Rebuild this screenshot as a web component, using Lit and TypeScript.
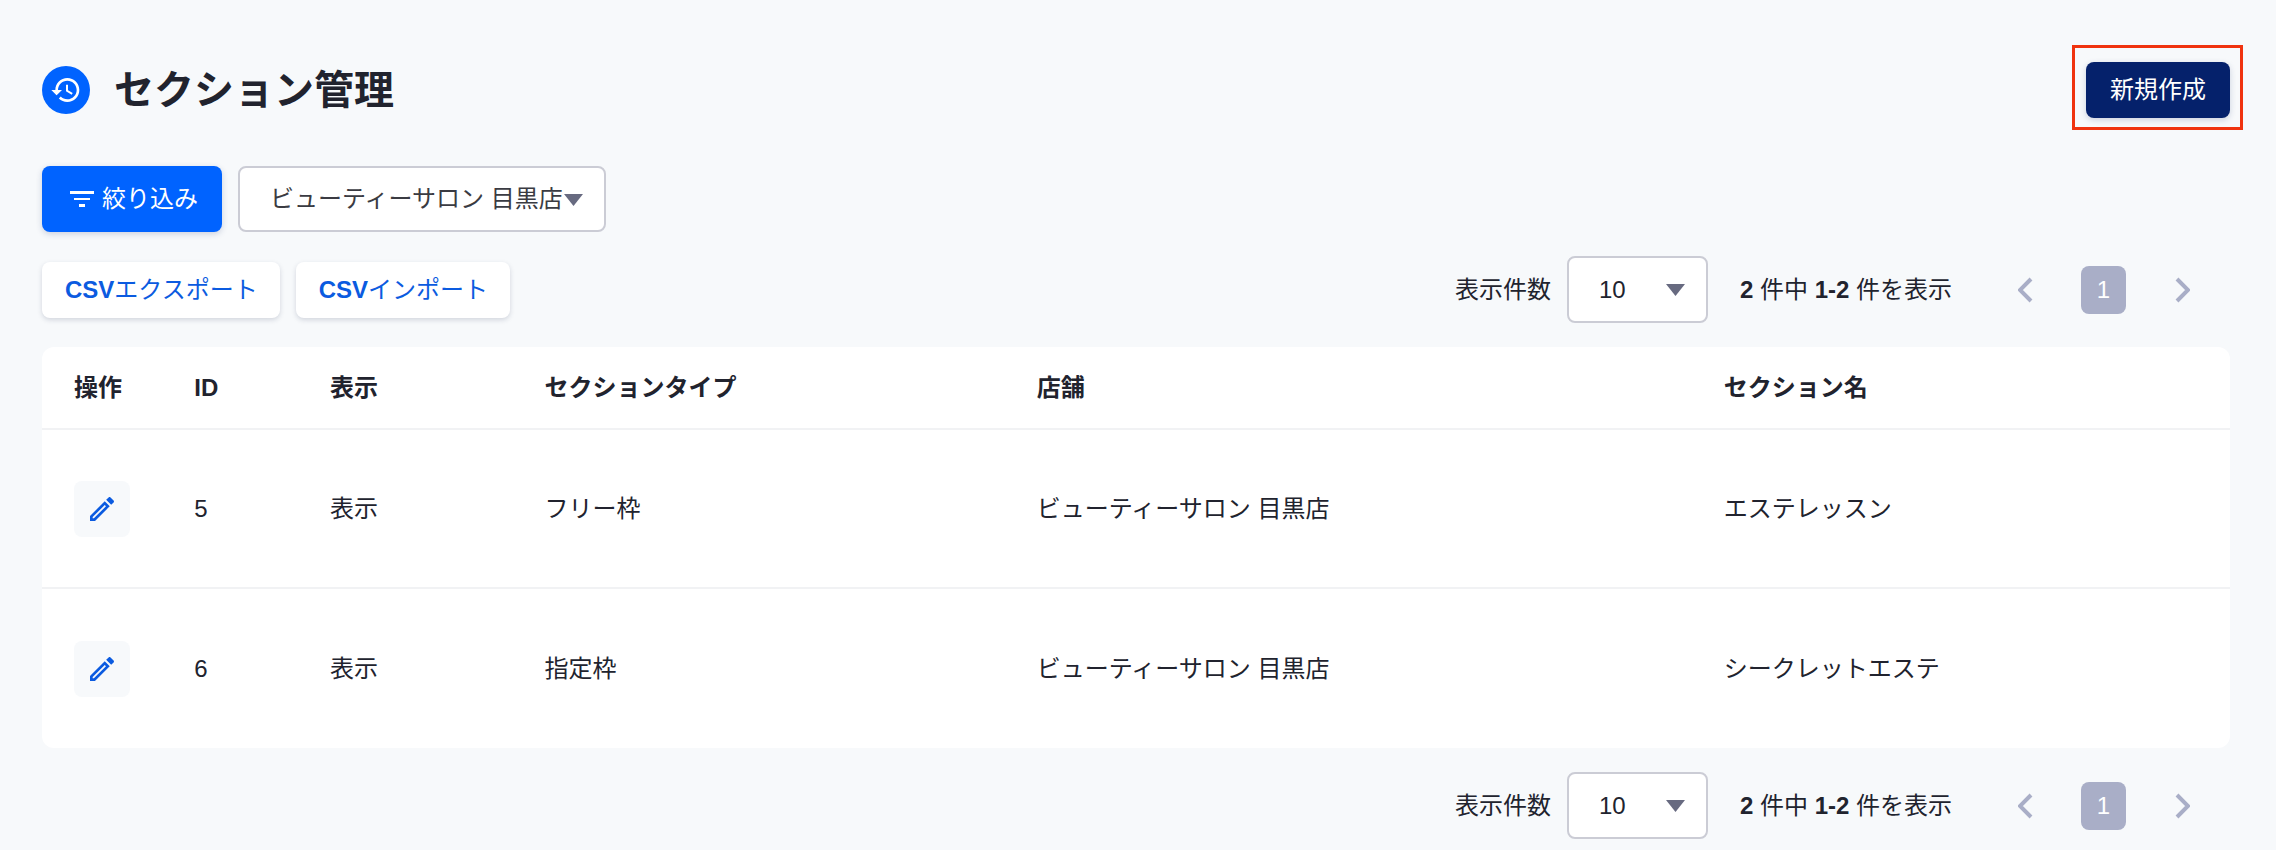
import { LitElement, html, css } from "lit";
import { customElement, property, state } from "lit/decorators.js";

interface Section {
  id: number;
  visibility: string;
  type: string;
  shop: string;
  name: string;
}

const SECTIONS: Section[] = [
  { id: 5, visibility: "表示", type: "フリー枠", shop: "ビューティーサロン 目黒店", name: "エステレッスン" },
  { id: 6, visibility: "表示", type: "指定枠", shop: "ビューティーサロン 目黒店", name: "シークレットエステ" },
];

const controls = css`
  * {
    box-sizing: border-box;
  }
  button,
  select {
    font: inherit;
    margin: 0;
    cursor: pointer;
  }
  svg {
    display: block;
    flex: none;
  }
  .select {
    position: relative;
    display: inline-flex;
  }
  .select select {
    appearance: none;
    height: 66px;
    border: 2px solid #cbccd5;
    border-radius: 8px;
    background: #ffffff;
    color: #3a3b42;
    padding: 0 39px 0 30px;
  }
  .select svg {
    position: absolute;
    right: 23px;
    top: 28px;
    pointer-events: none;
  }
`;

const caret = html`<svg width="19" height="12" viewBox="0 0 19 12" aria-hidden="true">
  <path d="M0 0h19L9.5 12z" fill="#676a80" />
</svg>`;

@customElement("page-controls")
export class PageControls extends LitElement {
  @property({ type: Number }) total = 0;

  static styles = [
    controls,
    css`
      :host {
        display: flex;
        justify-content: flex-end;
        align-items: center;
        padding-right: 26px;
      }
      .size {
        display: flex;
        align-items: center;
        gap: 16px;
      }
      .select select {
        width: 141px;
        height: 67px;
        color: #21232e;
      }
      .range {
        margin: 0 51px 0 32px;
      }
      nav {
        display: flex;
        gap: 33px;
      }
      nav button {
        width: 45px;
        height: 48px;
        display: flex;
        align-items: center;
        justify-content: center;
        padding: 0;
        border: 0;
        border-radius: 8px;
        background: none;
        color: #a9aec7;
      }
      nav .current {
        background: #a9aec7;
        color: #ffffff;
      }
    `,
  ];

  render() {
    return html`
      <div class="size">
        <label for="size">表示件数</label>
        <span class="select">
          <select id="size">
            <option>10</option>
            <option>20</option>
            <option>50</option>
          </select>
          ${caret}
        </span>
      </div>
      <div class="range"><b>${this.total}</b> 件中 <b>1-${this.total}</b> 件を表示</div>
      <nav aria-label="ページ送り">
        <button aria-label="前へ">
          <svg width="16" height="26" viewBox="0 0 16 26" fill="none" stroke="currentColor" stroke-width="4">
            <path d="M13 2 2 13l11 11" />
          </svg>
        </button>
        <button class="current" aria-current="page">1</button>
        <button aria-label="次へ">
          <svg width="16" height="26" viewBox="0 0 16 26" fill="none" stroke="currentColor" stroke-width="4">
            <path d="m3 2 11 11L3 24" />
          </svg>
        </button>
      </nav>
    `;
  }
}

@customElement("app-root")
export class AppRoot extends LitElement {
  @state() private sections = SECTIONS;

  static styles = [
    controls,
    css`
      :host {
        display: block;
        min-height: 100vh;
        box-sizing: border-box;
        padding: 62px 46px 0 42px;
        background: #f7f9fb;
        color: #21232e;
        font-family: "Liberation Sans", "Noto Sans CJK JP", sans-serif;
        font-size: 24px;
        line-height: 36px;
      }
      header {
        display: flex;
        align-items: center;
        gap: 24px;
        height: 56px;
      }
      .badge {
        display: grid;
        place-items: center;
        width: 48px;
        height: 48px;
        border-radius: 50%;
        background: #0063ff;
      }
      h1 {
        flex: 1;
        margin: 0;
        font-size: 40px;
        line-height: 56px;
        font-weight: 700;
      }
      .callout {
        position: relative;
        display: flex;
      }
      .callout::after {
        content: "";
        position: absolute;
        inset: -17px -13px -12px -14px;
        border: 3px solid #f0330f;
        pointer-events: none;
      }
      .create {
        height: 56px;
        padding: 0 24px;
        border: 0;
        border-radius: 8px;
        background: #05216b;
        color: #ffffff;
        box-shadow: 0 2px 6px rgba(30, 50, 110, 0.2);
      }
      .filters {
        display: flex;
        gap: 16px;
        margin-top: 48px;
      }
      .filter {
        display: flex;
        align-items: center;
        gap: 8px;
        height: 66px;
        padding: 0 24px 0 28px;
        border: 0;
        border-radius: 8px;
        background: #0063ff;
        color: #ffffff;
        box-shadow: 0 2px 6px rgba(30, 50, 110, 0.2);
      }
      .actions {
        display: flex;
        align-items: center;
        gap: 16px;
        margin: 24px 0;
      }
      .actions page-controls {
        flex: 1;
      }
      .csv {
        height: 56px;
        padding: 0 22px 0 23px;
        border: 0;
        border-radius: 8px;
        background: #ffffff;
        color: #0b5be0;
        box-shadow: 0 2px 5px rgba(30, 40, 80, 0.17);
      }
      table {
        width: 100%;
        table-layout: fixed;
        border-collapse: separate;
        border-spacing: 0;
        background: #ffffff;
        border-radius: 12px;
        margin-bottom: 24px;
      }
      th,
      td {
        padding: 0 0 0 32px;
        text-align: left;
      }
      th {
        height: 83px;
        font-weight: 700;
      }
      td {
        height: 159px;
      }
      th,
      tr:not(:last-child) td {
        border-bottom: 2px solid #f1f2f4;
      }
      .c-action {
        width: 5.5%;
      }
      .c-id {
        width: 6.2%;
      }
      .c-visibility {
        width: 9.8%;
      }
      .c-type {
        width: 22.5%;
      }
      .c-shop {
        width: 31.4%;
      }
      .edit {
        display: grid;
        place-items: center;
        width: 56px;
        height: 56px;
        padding: 0;
        border: 0;
        border-radius: 8px;
        background: #f7f9fb;
      }
    `,
  ];

  render() {
    return html`
      <header>
        <span class="badge">
          <svg width="32" height="32" viewBox="0 0 24 24" fill="#ffffff" aria-hidden="true">
            <path
              d="M13 3c-4.97 0-9 4.03-9 9H1l3.89 3.89.07.14L9 12H6c0-3.87 3.13-7 7-7s7 3.13 7 7-3.13 7-7 7c-1.93 0-3.68-.79-4.94-2.06l-1.42 1.42C8.27 19.99 10.51 21 13 21c4.97 0 9-4.03 9-9s-4.03-9-9-9zm-1 5v5l4.25 2.52.77-1.28-3.52-2.09V8z"
            />
          </svg>
        </span>
        <h1>セクション管理</h1>
        <div class="callout"><button class="create">新規作成</button></div>
      </header>

      <div class="filters">
        <button class="filter">
          <svg width="24" height="16" viewBox="0 0 24 16" fill="#ffffff" aria-hidden="true">
            <path d="M0 0h24v3H0zM4 7h16v2H4zM9 13h6v3H9z" />
          </svg>
          絞り込み
        </button>
        <span class="select">
          <select aria-label="店舗">
            <option>ビューティーサロン 目黒店</option>
          </select>
          ${caret}
        </span>
      </div>

      <div class="actions">
        <button class="csv"><b>CSV</b>エクスポート</button>
        <button class="csv"><b>CSV</b>インポート</button>
        <page-controls .total=${this.sections.length}></page-controls>
      </div>

      <table>
        <thead>
          <tr>
            <th class="c-action">操作</th>
            <th class="c-id">ID</th>
            <th class="c-visibility">表示</th>
            <th class="c-type">セクションタイプ</th>
            <th class="c-shop">店舗</th>
            <th>セクション名</th>
          </tr>
        </thead>
        <tbody>
          ${this.sections.map(
            (s) => html`<tr>
              <td>
                <button class="edit" aria-label="編集">
                  <svg width="32" height="32" viewBox="0 0 24 24" fill="#0b5be0" aria-hidden="true">
                    <path
                      d="m14.06 9.02.92.92L5.92 19H5v-.92l9.06-9.06M17.66 3c-.25 0-.51.1-.7.29l-1.83 1.83 3.75 3.75 1.83-1.83c.39-.39.39-1.02 0-1.41l-2.34-2.34c-.2-.2-.45-.29-.71-.29zm-3.6 3.19L3 17.25V21h3.75L17.81 9.94l-3.75-3.75z"
                    />
                  </svg>
                </button>
              </td>
              <td>${s.id}</td>
              <td>${s.visibility}</td>
              <td>${s.type}</td>
              <td>${s.shop}</td>
              <td>${s.name}</td>
            </tr>`
          )}
        </tbody>
      </table>

      <page-controls .total=${this.sections.length}></page-controls>
    `;
  }
}
